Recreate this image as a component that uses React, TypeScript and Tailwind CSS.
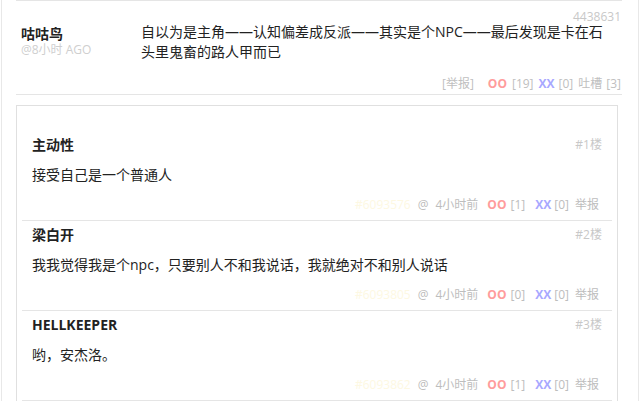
import React from 'react';

interface Comment {
  id: string;
  floor: number;
  author: string;
  body: string;
  time: string;
  oo: number;
  xx: number;
}

const comments: Comment[] = [
  { id: '6093576', floor: 1, author: '主动性', body: '接受自己是一个普通人', time: '4小时前', oo: 1, xx: 0 },
  { id: '6093805', floor: 2, author: '梁白开', body: '我我觉得我是个npc，只要别人不和我说话，我就绝对不和别人说话', time: '4小时前', oo: 0, xx: 0 },
  { id: '6093862', floor: 3, author: 'HELLKEEPER', body: '哟，安杰洛。', time: '4小时前', oo: 1, xx: 0 },
];

function CommentRow({ c }: { c: Comment }) {
  return (
    <div className="border-b border-[#e5e5e5] px-[10px] pt-[4px] pb-[5px]">
      <div className="flex items-center justify-between h-5">
        <span className="text-[14px] font-bold text-[#222] leading-5">{c.author}</span>
        <span className="text-[12px] text-[#c8c8c8] leading-5">#{c.floor}楼</span>
      </div>
      <div className="mt-[10px] text-[14px] leading-5 text-[#222]">{c.body}</div>
      <div className="mt-[10px] flex justify-end items-center h-5 text-[12px] leading-5 text-[#bdbdbd]">
        <span className="text-[#fdf8e2]">#{c.id}</span>
        <span className="ml-[7px]">@</span>
        <span className="ml-[7px]">{c.time}</span>
        <span className="ml-[9px] font-bold text-[#ff9c9c]">OO</span>
        <span className="ml-[4px]">[{c.oo}]</span>
        <span className="ml-[10px] font-bold text-[#a8a8ff]">XX</span>
        <span className="ml-[3px]">[{c.xx}]</span>
        <span className="ml-[6px] mr-[3px]">举报</span>
      </div>
    </div>
  );
}

export default function App() {
  return (
    <div
      className="w-[641px] h-[401px] overflow-hidden bg-white"
      style={{ fontFamily: '"Open Sans", "Noto Sans CJK SC", sans-serif' }}
    >
      <div className="ml-px w-[638px] h-[401px] border-l border-r border-[#e8e8e8] pl-[14px]">
        <div className="w-[606px] border-t border-b border-[#e5e5e5] pl-[5px] pr-px">
          <div className="h-[21px] pt-[10px] text-right text-[12px] leading-[11px] text-[#c8c8c8]">4438631</div>
          <div className="flex">
            <div className="w-[120px] pt-[4px]">
              <div className="text-[14px] font-bold leading-4 text-[#222]">咕咕鸟</div>
              <div className="mt-[2px] text-[12px] leading-3 text-[#cfcfcf]">@8小时 AGO</div>
            </div>
            <div className="w-[472px] text-[14px] leading-5 text-[#222]">
              自以为是主角——认知偏差成反派——其实是个NPC——最后发现是卡在石头里鬼畜的路人甲而已
            </div>
          </div>
          <div className="mt-[14px] pb-[2px] flex justify-end items-center h-[18px] text-[12px] leading-4 text-[#c0c0c0]">
            <span>[举报]</span>
            <span className="ml-[14px] font-bold text-[#ff9c9c]">OO</span>
            <span className="ml-[5px]">[19]</span>
            <span className="ml-[5px] font-bold text-[#a8a8ff]">XX</span>
            <span className="ml-[4px]">[0]</span>
            <span className="ml-[5px]">吐槽</span>
            <span className="ml-[4px]">[3]</span>
          </div>
        </div>
        <div className="mt-[10px] w-[602px] border border-[#e0e0e0] pt-[25px] px-[5px]">
          {comments.map((c) => (
            <CommentRow key={c.id} c={c} />
          ))}
        </div>
      </div>
    </div>
  );
}
